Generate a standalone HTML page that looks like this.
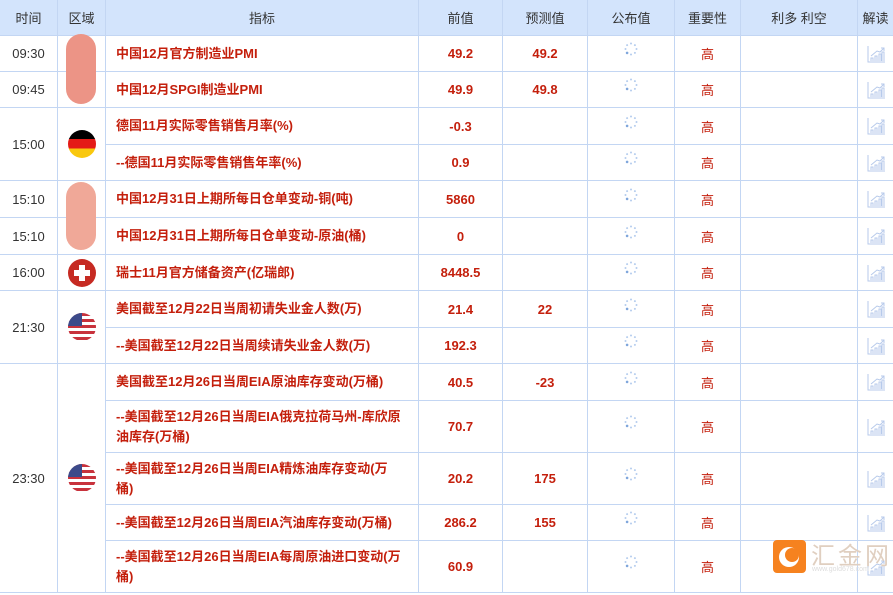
<!DOCTYPE html>
<html><head><meta charset="utf-8"><style>
body{margin:0;width:893px;height:595px;overflow:hidden;background:#fff;font-family:"Liberation Sans","Noto Sans CJK SC",sans-serif;}
table{border-collapse:collapse;table-layout:fixed;width:894px;position:absolute;left:-1px;top:-1px;}
td,th{border:1px solid #c3d6f3;padding:0;text-align:center;font-size:13px;}
th{background:#d3e4fc;color:#333;font-weight:normal;height:35px;font-size:13px;}
td.t{color:#333;}
td.n{text-align:left;padding-left:10px;padding-right:0;color:#c41f0c;font-weight:bold;line-height:20px;white-space:nowrap;overflow:hidden;}
td.v{color:#c41f0c;font-weight:bold;}
td.h{color:#c41f0c;}
.fl{width:28px;height:28px;border-radius:50%;display:inline-block;vertical-align:middle;overflow:hidden;position:relative}
.blob{position:absolute;left:66px;width:30px;background:#ee9a8c;border-radius:15px;}
svg.c{vertical-align:middle}
</style></head><body>
<svg width="0" height="0" style="position:absolute"><defs>
<g id="sp" fill="#b5cdee"><circle cx="0" cy="-5.5" r="1"/><circle cx="3.9" cy="-3.9" r="1"/><circle cx="5.5" cy="0" r="1"/><circle cx="3.9" cy="3.9" r="1"/><circle cx="0" cy="5.5" r="1"/><circle cx="-3.9" cy="3.9" r="1.3" fill="#7fa6dc"/><circle cx="-5.5" cy="0" r="1"/><circle cx="-3.9" cy="-3.9" r="1"/></g>
<g id="ch" fill="none" stroke="#b7caeb" stroke-width="1"><path d="M1 1V17H18"/><path d="M4 16V13H6V16M8 16V11H10V16M12 16V9H14V16M15 16V7H17V16"/><path d="M4 11L10 6L13 7L17 3M14 3H17V6"/></g>
</defs></svg>
<table>
<colgroup><col style="width:58px"><col style="width:48px"><col style="width:313px"><col style="width:84px"><col style="width:85px"><col style="width:87px"><col style="width:66px"><col style="width:117px"><col style="width:36px"></colgroup>
<tr><th>时间</th><th>区域</th><th>指标</th><th>前值</th><th>预测值</th><th>公布值</th><th>重要性</th><th>利多 利空</th><th>解读</th></tr>
<tr style="height:36px"><td class="t">09:30</td><td></td><td class="n">中国12月官方制造业PMI</td><td class="v">49.2</td><td class="v">49.2</td><td><svg width="14" height="14" viewBox="-7 -7 14 14" style="position:relative;top:-3px"><use href="#sp"/></svg></td><td class="h">高</td><td></td><td><svg class="c" width="18" height="18"><use href="#ch"/></svg></td></tr>
<tr style="height:36px"><td class="t">09:45</td><td></td><td class="n">中国12月SPGI制造业PMI</td><td class="v">49.9</td><td class="v">49.8</td><td><svg width="14" height="14" viewBox="-7 -7 14 14" style="position:relative;top:-3px"><use href="#sp"/></svg></td><td class="h">高</td><td></td><td><svg class="c" width="18" height="18"><use href="#ch"/></svg></td></tr>
<tr style="height:37px"><td class="t" rowspan="2">15:00</td><td rowspan="2"><span class="fl" style="background:linear-gradient(#000 33%,#e41b17 33%,#e41b17 66%,#f9c80e 66%)"></span></td><td class="n">德国11月实际零售销售月率(%)</td><td class="v">-0.3</td><td></td><td><svg width="14" height="14" viewBox="-7 -7 14 14" style="position:relative;top:-3px"><use href="#sp"/></svg></td><td class="h">高</td><td></td><td><svg class="c" width="18" height="18"><use href="#ch"/></svg></td></tr>
<tr style="height:36px"><td class="n">--德国11月实际零售销售年率(%)</td><td class="v">0.9</td><td></td><td><svg width="14" height="14" viewBox="-7 -7 14 14" style="position:relative;top:-3px"><use href="#sp"/></svg></td><td class="h">高</td><td></td><td><svg class="c" width="18" height="18"><use href="#ch"/></svg></td></tr>
<tr style="height:37px"><td class="t">15:10</td><td></td><td class="n">中国12月31日上期所每日仓单变动-铜(吨)</td><td class="v">5860</td><td></td><td><svg width="14" height="14" viewBox="-7 -7 14 14" style="position:relative;top:-3px"><use href="#sp"/></svg></td><td class="h">高</td><td></td><td><svg class="c" width="18" height="18"><use href="#ch"/></svg></td></tr>
<tr style="height:37px"><td class="t">15:10</td><td></td><td class="n">中国12月31日上期所每日仓单变动-原油(桶)</td><td class="v">0</td><td></td><td><svg width="14" height="14" viewBox="-7 -7 14 14" style="position:relative;top:-3px"><use href="#sp"/></svg></td><td class="h">高</td><td></td><td><svg class="c" width="18" height="18"><use href="#ch"/></svg></td></tr>
<tr style="height:36px"><td class="t">16:00</td><td><svg width="28" height="28" style="vertical-align:middle"><circle cx="14" cy="14" r="14" fill="#c62a22"/><path d="M11 6h6v5h5v6h-5v5h-6v-5h-5v-6h5z" fill="#fff"/></svg></td><td class="n">瑞士11月官方储备资产(亿瑞郎)</td><td class="v">8448.5</td><td></td><td><svg width="14" height="14" viewBox="-7 -7 14 14" style="position:relative;top:-3px"><use href="#sp"/></svg></td><td class="h">高</td><td></td><td><svg class="c" width="18" height="18"><use href="#ch"/></svg></td></tr>
<tr style="height:37px"><td class="t" rowspan="2">21:30</td><td rowspan="2"><span class="fl" style="background:repeating-linear-gradient(#c8323c 0 3px,#fff 3px 6px)"><span style="position:absolute;left:0;top:0;width:14px;height:13px;background:#3c4a8a"></span></span></td><td class="n">美国截至12月22日当周初请失业金人数(万)</td><td class="v">21.4</td><td class="v">22</td><td><svg width="14" height="14" viewBox="-7 -7 14 14" style="position:relative;top:-3px"><use href="#sp"/></svg></td><td class="h">高</td><td></td><td><svg class="c" width="18" height="18"><use href="#ch"/></svg></td></tr>
<tr style="height:36px"><td class="n">--美国截至12月22日当周续请失业金人数(万)</td><td class="v">192.3</td><td></td><td><svg width="14" height="14" viewBox="-7 -7 14 14" style="position:relative;top:-3px"><use href="#sp"/></svg></td><td class="h">高</td><td></td><td><svg class="c" width="18" height="18"><use href="#ch"/></svg></td></tr>
<tr style="height:37px"><td class="t" rowspan="5">23:30</td><td rowspan="5"><span class="fl" style="background:repeating-linear-gradient(#c8323c 0 3px,#fff 3px 6px)"><span style="position:absolute;left:0;top:0;width:14px;height:13px;background:#3c4a8a"></span></span></td><td class="n">美国截至12月26日当周EIA原油库存变动(万桶)</td><td class="v">40.5</td><td class="v">-23</td><td><svg width="14" height="14" viewBox="-7 -7 14 14" style="position:relative;top:-3px"><use href="#sp"/></svg></td><td class="h">高</td><td></td><td><svg class="c" width="18" height="18"><use href="#ch"/></svg></td></tr>
<tr style="height:52px"><td class="n">--美国截至12月26日当周EIA俄克拉荷马州-库欣原<br>油库存(万桶)</td><td class="v">70.7</td><td></td><td><svg width="14" height="14" viewBox="-7 -7 14 14" style="position:relative;top:-3px"><use href="#sp"/></svg></td><td class="h">高</td><td></td><td><svg class="c" width="18" height="18"><use href="#ch"/></svg></td></tr>
<tr style="height:52px"><td class="n">--美国截至12月26日当周EIA精炼油库存变动(万<br>桶)</td><td class="v">20.2</td><td class="v">175</td><td><svg width="14" height="14" viewBox="-7 -7 14 14" style="position:relative;top:-3px"><use href="#sp"/></svg></td><td class="h">高</td><td></td><td><svg class="c" width="18" height="18"><use href="#ch"/></svg></td></tr>
<tr style="height:36px"><td class="n">--美国截至12月26日当周EIA汽油库存变动(万桶)</td><td class="v">286.2</td><td class="v">155</td><td><svg width="14" height="14" viewBox="-7 -7 14 14" style="position:relative;top:-3px"><use href="#sp"/></svg></td><td class="h">高</td><td></td><td><svg class="c" width="18" height="18"><use href="#ch"/></svg></td></tr>
<tr style="height:52px"><td class="n">--美国截至12月26日当周EIA每周原油进口变动(万<br>桶)</td><td class="v">60.9</td><td></td><td><svg width="14" height="14" viewBox="-7 -7 14 14" style="position:relative;top:-3px"><use href="#sp"/></svg></td><td class="h">高</td><td></td><td><svg class="c" width="18" height="18"><use href="#ch"/></svg></td></tr>
</table>
<div class="blob" style="top:34px;height:70px;background:#ec9486"></div>
<div class="blob" style="top:182px;height:68px;background:#f0a898"></div>
<div style="position:absolute;left:773px;top:540px;width:33px;height:33px;background:#f6821f;border-radius:4px"><svg width="33" height="33"><circle cx="16" cy="17" r="10" fill="#fff"/><circle cx="19" cy="15" r="7" fill="#f6821f"/></svg></div>
<div style="position:absolute;left:811px;top:536px;font-size:24px;color:#e0cfc0;letter-spacing:3px">汇金网</div>
<div style="position:absolute;left:812px;top:566px;font-size:7px;color:#ddd">www.gold678.com</div>
</body></html>
